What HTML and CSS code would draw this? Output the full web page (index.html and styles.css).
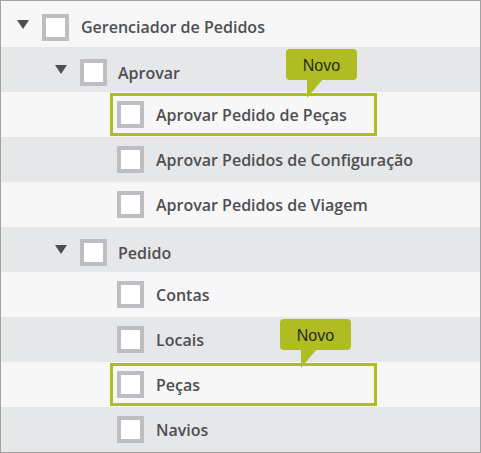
FILE: index.html
```html
<!DOCTYPE html>
<html lang="pt">
<head>
<meta charset="utf-8">
<title>Gerenciador de Pedidos</title>
<link rel="stylesheet" href="styles.css">
</head>
<body>
<div class="tree">
  <div class="row light parent first lvl1">
    <span class="toggle"></span><span class="cb"></span><span class="label">Gerenciador de Pedidos</span>
  </div>
  <div class="row dark parent lvl2">
    <span class="toggle"></span><span class="cb"></span><span class="label">Aprovar</span>
  </div>
  <div class="row light lvl3 hl-row">
    <div class="hl">
      <span class="cb"></span><span class="label">Aprovar Pedido de Peças</span>
      <span class="tip">Novo</span>
    </div>
  </div>
  <div class="row dark lvl3">
    <span class="cb"></span><span class="label">Aprovar Pedidos de Configuração</span>
  </div>
  <div class="row light lvl3">
    <span class="cb"></span><span class="label">Aprovar Pedidos de Viagem</span>
  </div>
  <div class="row dark parent lvl2">
    <span class="toggle"></span><span class="cb"></span><span class="label">Pedido</span>
  </div>
  <div class="row light lvl3">
    <span class="cb"></span><span class="label">Contas</span>
  </div>
  <div class="row dark lvl3">
    <span class="cb"></span><span class="label">Locais</span>
  </div>
  <div class="row light lvl3 hl-row">
    <div class="hl">
      <span class="cb"></span><span class="label">Peças</span>
      <span class="tip tip2">Novo</span>
    </div>
  </div>
  <div class="row dark lvl3">
    <span class="cb"></span><span class="label">Navios</span>
  </div>
</div>
</body>
</html>
```

FILE: styles.css
```css
html, body {
  margin: 0;
  padding: 0;
  background: #ffffff;
}

.tree {
  width: 481px;
  height: 453px;
  box-sizing: border-box;
  border: 1px solid #a3a3a3;
  display: flex;
  flex-direction: column;
  font-family: "Open Sans", "Liberation Sans", sans-serif;
  overflow: hidden;
}

.row {
  height: 45px;
  flex: 0 0 auto;
  display: flex;
  align-items: center;
  box-sizing: border-box;
}

.row.first {
  height: 46px;
}

.light { background: #f7f7f7; }
.dark { background: #e6e7e8; }

.parent {
  padding-top: 6px;
}

.lvl1 { padding-left: 16px; }
.lvl2 { padding-left: 54px; }
.lvl3 { padding-left: 116px; }
.hl-row { padding-left: 109px; }

.toggle {
  width: 0;
  height: 0;
  border-left: 6px solid transparent;
  border-right: 6px solid transparent;
  border-top: 9px solid #4d4f53;
  margin-top: -6px;
  margin-right: 13px;
}

.cb {
  width: 27px;
  height: 27px;
  box-sizing: border-box;
  border: 4px solid #bdbec1;
  background: #ffffff;
  flex: 0 0 auto;
}

.label {
  margin-left: 12px;
  font-size: 16px;
  font-weight: 600;
  color: #4d4f53;
  white-space: nowrap;
}

.lvl2 .label { margin-left: 11px; }

.hl {
  position: relative;
  width: 267px;
  height: 43px;
  box-sizing: border-box;
  border: 3px solid #afbd22;
  display: flex;
  align-items: center;
  padding-left: 4px;
}

.tip {
  position: absolute;
  left: 173px;
  top: -47px;
  width: 71px;
  height: 31px;
  box-sizing: border-box;
  background: #afbd22;
  border-radius: 4px;
  color: #2a2a1e;
  font-family: "Liberation Sans", Arial, sans-serif;
  font-size: 16px;
  display: flex;
  align-items: center;
  justify-content: center;
  padding-top: 2px;
}

.tip2 {
  left: 167px;
}

.tip::after {
  content: "";
  position: absolute;
  left: 21px;
  top: 30px;
  width: 0;
  height: 0;
  border-right: 16px solid transparent;
  border-top: 19px solid #afbd22;
}
```
